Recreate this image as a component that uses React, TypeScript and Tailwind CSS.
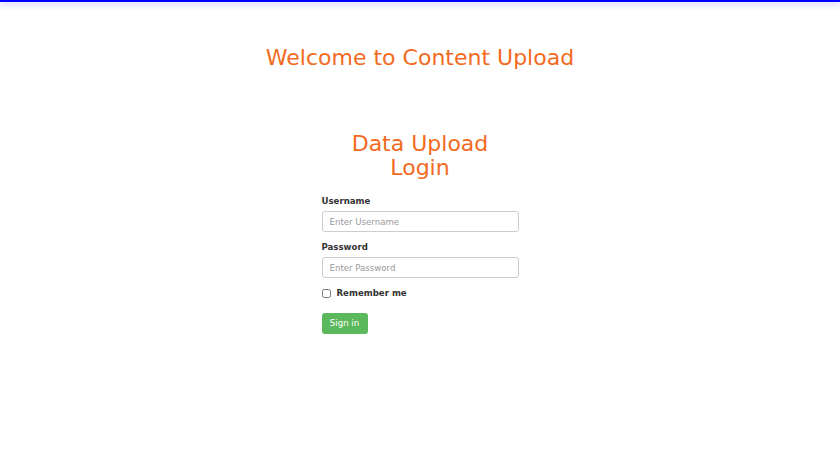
import { useState } from "react";

const App = () => {
    const [username, setUsername] = useState("");
    const [password, setPassword] = useState("");
    const [remember, setRemember] = useState(false);

    return (
        <div className="min-h-screen bg-white" style={{ fontFamily: '"DejaVu Sans", sans-serif' }}>
            {/* top accent bar */}
            <div className="h-[2px] bg-[#0000ff] shadow-[0_2px_6px_rgba(0,0,255,0.35)]" />

            <h1 className="mt-[42px] text-center text-[22px] leading-[28px] text-[#f26a21]">
                Welcome to Content Upload
            </h1>

            <div className="mx-auto mt-[60px] w-[197px]">
                <h2 className="text-center text-[22px] leading-[24px] text-[#f26a21]">
                    Data Upload
                    <br />
                    Login
                </h2>

                <form className="mt-[12px] flex flex-col" onSubmit={(e) => e.preventDefault()}>
                    <label className="text-[8.6px] font-bold leading-[18px] text-[#333]">Username</label>
                    <input
                        value={username}
                        onChange={(e) => setUsername(e.target.value)}
                        placeholder="Enter Username"
                        className="mt-[1px] h-[21px] w-full rounded-[3px] border border-[#ccc] px-[7px] text-[8.6px] text-[#333] placeholder:text-[#999] outline-none"
                    />

                    <label className="mt-[6px] text-[8.6px] font-bold leading-[18px] text-[#333]">Password</label>
                    <input
                        type="password"
                        value={password}
                        onChange={(e) => setPassword(e.target.value)}
                        placeholder="Enter Password"
                        className="mt-[1px] h-[21px] w-full rounded-[3px] border border-[#ccc] px-[7px] text-[8.6px] text-[#333] placeholder:text-[#999] outline-none"
                    />

                    <label className="mt-[7px] flex h-[16px] items-center gap-[6px] text-[8.6px] font-bold text-[#333]">
                        <input
                            type="checkbox"
                            checked={remember}
                            onChange={(e) => setRemember(e.target.checked)}
                            className="h-[9px] w-[9px]"
                        />
                        Remember me
                    </label>

                    <button
                        type="submit"
                        className="mt-[12px] h-[21px] w-[46px] self-start rounded-[3px] bg-[#5cb85c] text-[8.6px] text-white"
                    >
                        Sign in
                    </button>
                </form>
            </div>
        </div>
    );
};

export default App;
